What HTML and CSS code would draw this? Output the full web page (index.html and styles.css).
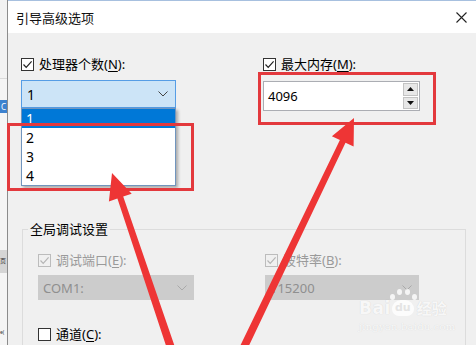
FILE: index.html
```html
<!DOCTYPE html>
<html lang="zh-CN">
<head>
    <meta charset="UTF-8">
    <meta name="viewport" content="width=device-width, initial-scale=1.0">
    <title>引导高级选项</title>
    <link rel="stylesheet" href="styles.css">
</head>
<body>
    <div class="screen">
        <div class="bg-window">
            <div class="bg-top"></div>
            <div class="bg-sel">C</div>
            <div class="bg-gap"></div>
            <div class="bg-tab">页</div>
            <div class="bg-low">e(</div>
        </div>

        <div class="dialog">
            <div class="titlebar">
                <span class="title">引导高级选项</span>
                <svg class="close" width="11" height="11" viewBox="0 0 11 11">
                    <path d="M0.5 0.5 L10.5 10.5 M10.5 0.5 L0.5 10.5" stroke="#222" stroke-width="1.1" fill="none"/>
                </svg>
            </div>

            <div class="content">
                <div class="top-row">
                    <div class="col col-cpu">
                        <label class="check">
                            <span class="box"><svg width="11" height="11" viewBox="0 0 11 11"><path d="M1.5 5.5 L4.2 8.3 L9.6 2.4" stroke="#222" stroke-width="1.2" fill="none"/></svg></span>
                            <span>处理器个数(<u>N</u>):</span>
                        </label>
                        <div class="combo combo-open">
                            <span>1</span>
                            <svg class="chevron" width="10" height="6" viewBox="0 0 10 6"><path d="M0.5 0.5 L5 5 L9.5 0.5" stroke="#444" stroke-width="1" fill="none"/></svg>
                            <ul class="droplist">
                                <li class="selected">1</li>
                                <li>2</li>
                                <li>3</li>
                                <li>4</li>
                            </ul>
                        </div>
                    </div>
                    <div class="col col-mem">
                        <label class="check">
                            <span class="box"><svg width="11" height="11" viewBox="0 0 11 11"><path d="M1.5 5.5 L4.2 8.3 L9.6 2.4" stroke="#222" stroke-width="1.2" fill="none"/></svg></span>
                            <span>最大内存(<u>M</u>):</span>
                        </label>
                        <div class="spin">
                            <span class="spin-value">4096</span>
                            <div class="spin-btns">
                                <span class="spin-btn"><svg width="7" height="4" viewBox="0 0 7 4"><path d="M0 4 L3.5 0 L7 4 Z" fill="#111"/></svg></span>
                                <span class="spin-btn"><svg width="7" height="4" viewBox="0 0 7 4"><path d="M0 0 L7 0 L3.5 4 Z" fill="#111"/></svg></span>
                            </div>
                        </div>
                    </div>
                </div>

                <fieldset class="group">
                    <legend>全局调试设置</legend>
                    <div class="group-grid">
                        <label class="check disabled">
                            <span class="box"><svg width="11" height="11" viewBox="0 0 11 11"><path d="M1.5 5.5 L4.2 8.3 L9.6 2.4" stroke="#b5b5b5" stroke-width="1.2" fill="none"/></svg></span>
                            <span>调试端口(<u>E</u>):</span>
                        </label>
                        <label class="check disabled">
                            <span class="box"><svg width="11" height="11" viewBox="0 0 11 11"><path d="M1.5 5.5 L4.2 8.3 L9.6 2.4" stroke="#b5b5b5" stroke-width="1.2" fill="none"/></svg></span>
                            <span>波特率(<u>B</u>):</span>
                        </label>
                        <div class="combo combo-disabled">
                            <span>COM1:</span>
                            <svg class="chevron" width="10" height="6" viewBox="0 0 10 6"><path d="M0.5 0.5 L5 5 L9.5 0.5" stroke="#a9a9a9" stroke-width="1" fill="none"/></svg>
                        </div>
                        <div class="combo combo-disabled">
                            <span>115200</span>
                            <svg class="chevron" width="10" height="6" viewBox="0 0 10 6"><path d="M0.5 0.5 L5 5 L9.5 0.5" stroke="#a9a9a9" stroke-width="1" fill="none"/></svg>
                        </div>
                        <label class="check channel">
                            <span class="box box-empty"></span>
                            <span>通道(<u>C</u>):</span>
                        </label>
                    </div>
                </fieldset>
            </div>
        </div>

        <!-- annotation overlays -->
        <div class="mark mark-list"></div>
        <div class="mark mark-mem"></div>
        <svg class="arrows" width="476" height="345" viewBox="0 0 476 345">
            <polygon points="112,173 131.7,193.8 123.2,196.6 179.5,360.3 171.7,362.9 117.4,198.6 108.9,201.4" fill="#ee3535"/>
            <polygon points="354,118 353.6,146.6 345.5,142.8 241,362.4 233.8,359 339.9,140.1 331.9,136.3" fill="#ee3535"/>
        </svg>

        <div class="watermark">
            <div class="wm-logo">
                <span class="wm-bai">Bai</span>
                <span class="wm-paw">
                    <span class="paw-dot d1"></span>
                    <span class="paw-dot d2"></span>
                    <span class="paw-dot d3"></span>
                    <span class="paw-dot d4"></span>
                    <span class="wm-du">du</span>
                </span>
                <span class="wm-jy">经验</span>
            </div>
            <div class="wm-url">jingyan.baidu.com</div>
        </div>
    </div>
</body>
</html>
```

FILE: styles.css
```css
html, body {
    margin: 0;
    padding: 0;
    background-color: #f0f0f0;
    font-family: "Noto Sans", "Noto Sans CJK SC", sans-serif;
    font-size: 13px;
    color: #000;
}

.screen {
    position: relative;
    width: 476px;
    height: 345px;
    overflow: hidden;
    display: flex;
}

/* window behind the dialog */
.bg-window {
    width: 7px;
    flex: none;
    background-color: #f5f5f5;
    display: flex;
    flex-direction: column;
    overflow: hidden;
    color: #333;
}
.bg-window > div {
    flex: none;
}
.bg-top {
    height: 78px;
    border-bottom: 1px solid #dadada;
    background-color: #f2f2f2;
}
.bg-sel {
    margin-top: 21px;
    height: 13px;
    line-height: 13px;
    background-color: #3c82cf;
    color: #fff;
    font-size: 8px;
    padding-left: 1px;
}
.bg-gap {
    height: 137px;
}
.bg-tab {
    height: 23px;
    line-height: 23px;
    background-color: #d5d5d5;
    font-size: 6px;
}
.bg-low {
    margin-top: 53px;
    font-size: 5px;
    line-height: 12px;
}

.dialog {
    flex: 1;
    border-left: 1px solid #8c8c8c;
    background-color: #f0f0f0;
    display: flex;
    flex-direction: column;
    min-width: 0;
}

.titlebar {
    flex: none;
    height: 33px;
    box-sizing: border-box;
    background-color: #fff;
    border-top: 1px solid #a7c0df;
    display: flex;
    align-items: center;
    justify-content: space-between;
    padding: 1px 9px 0 8px;
}
.title {
    font-size: 13px;
    color: #111;
}

.content {
    flex: none;
    padding: 24px 0 0 13px;
}

.top-row {
    display: flex;
    gap: 87px;
}
.col-cpu {
    width: 155px;
}
.col-mem {
    width: 157px;
}

.check {
    display: flex;
    align-items: center;
    gap: 5px;
    height: 14px;
    line-height: 14px;
    white-space: nowrap;
}
.check u {
    text-decoration-thickness: 1px;
    text-underline-offset: 2px;
}
.box {
    width: 13px;
    height: 13px;
    box-sizing: border-box;
    border: 1px solid #333;
    background-color: #fff;
    display: flex;
    align-items: center;
    justify-content: center;
    flex: none;
}
.check.disabled {
    color: #9a9a9a;
}
.check.disabled .box {
    border-color: #bcbcbc;
    background-color: #f0f0f0;
}

/* combo boxes */
.combo {
    position: relative;
    box-sizing: border-box;
    display: flex;
    align-items: center;
    justify-content: space-between;
    padding: 0 7px 0 5px;
}
.combo-open {
    margin-top: 9px;
    height: 28px;
    background-color: #cce4f7;
    border: 1px solid #569de5;
    font-size: 14px;
}
.droplist {
    position: absolute;
    top: 27px;
    left: -1px;
    width: 155px;
    margin: 0;
    padding: 0;
    list-style: none;
    background-color: #fff;
    border: 1px solid #7195be;
    box-sizing: border-box;
    box-shadow: 2px 2px 3px rgba(0, 0, 0, 0.3);
    z-index: 2;
}
.droplist li {
    height: 19px;
    line-height: 19px;
    padding-left: 4px;
    font-size: 14px;
}
.droplist li.selected {
    background-color: #0078d7;
    color: #fff;
}
.combo-disabled {
    margin-top: 8px;
    height: 25px;
    background-color: #cccccc;
    color: #8f8f8f;
    font-size: 13px;
}

/* numeric spin box */
.spin {
    margin-top: 10px;
    height: 30px;
    box-sizing: border-box;
    border: 1px solid #abadb3;
    background-color: #fff;
    display: flex;
    align-items: center;
    justify-content: space-between;
    padding: 1px 1px 1px 4px;
}
.spin-value {
    font-size: 13px;
}
.spin-btns {
    width: 15px;
    height: 26px;
    display: flex;
    flex-direction: column;
    gap: 1px;
}
.spin-btn {
    flex: 1;
    background-color: #e7e7e7;
    border: 1px solid #c3c3c3;
    display: flex;
    align-items: center;
    justify-content: center;
}

/* group box */
.group {
    margin: 110px 0 0 1px;
    width: 444px;
    box-sizing: border-box;
    border: 1px solid #dcdcdc;
    padding: 0 0 20px 15px;
}
.group legend {
    margin-left: -10px;
    padding: 0 2px;
    line-height: 16px;
    font-size: 13px;
}
.group-grid {
    display: grid;
    grid-template-columns: 156px 154px;
    column-gap: 71px;
    padding-top: 16px;
}
.channel {
    margin-top: 27px;
}

/* red annotations */
.mark {
    position: absolute;
    border: 3px solid #e3393d;
    box-sizing: border-box;
    z-index: 3;
}
.mark-list {
    left: 7px;
    top: 123px;
    width: 187px;
    height: 68px;
}
.mark-mem {
    left: 258px;
    top: 72px;
    width: 178px;
    height: 53px;
}
.arrows {
    position: absolute;
    left: 0;
    top: 0;
    z-index: 4;
    pointer-events: none;
}

/* site watermark */
.watermark {
    position: absolute;
    left: 359px;
    top: 288px;
    z-index: 5;
    color: rgba(255, 255, 255, 0.85);
    text-shadow: 0 0 1px rgba(0, 0, 0, 0.15);
}
.wm-logo {
    display: flex;
    align-items: flex-end;
    height: 30px;
}
.wm-bai {
    font-family: "DejaVu Sans", sans-serif;
    font-weight: bold;
    font-size: 17px;
    line-height: 20px;
    letter-spacing: 0.5px;
}
.wm-paw {
    position: relative;
    width: 22px;
    height: 16px;
    margin: 0 3px 2px 1px;
    background-color: rgba(255, 255, 255, 0.8);
    border-radius: 9px 9px 7px 7px;
}
.wm-du {
    display: block;
    text-align: center;
    color: #e4e4e4;
    font-family: "DejaVu Sans", sans-serif;
    font-weight: bold;
    font-size: 11px;
    line-height: 16px;
    text-shadow: none;
}
.paw-dot {
    position: absolute;
    width: 5px;
    height: 6px;
    border-radius: 50%;
    background-color: rgba(255, 255, 255, 0.8);
}
.d1 { left: -2px; top: -6px; }
.d2 { left: 5px; top: -11px; }
.d3 { left: 13px; top: -11px; }
.d4 { left: 20px; top: -6px; }
.wm-jy {
    font-family: "Noto Sans CJK SC", sans-serif;
    font-weight: bold;
    font-size: 15px;
    line-height: 20px;
}
.wm-url {
    font-family: "DejaVu Serif", serif;
    font-size: 10px;
    margin-top: 3px;
    letter-spacing: 0.2px;
}
```
